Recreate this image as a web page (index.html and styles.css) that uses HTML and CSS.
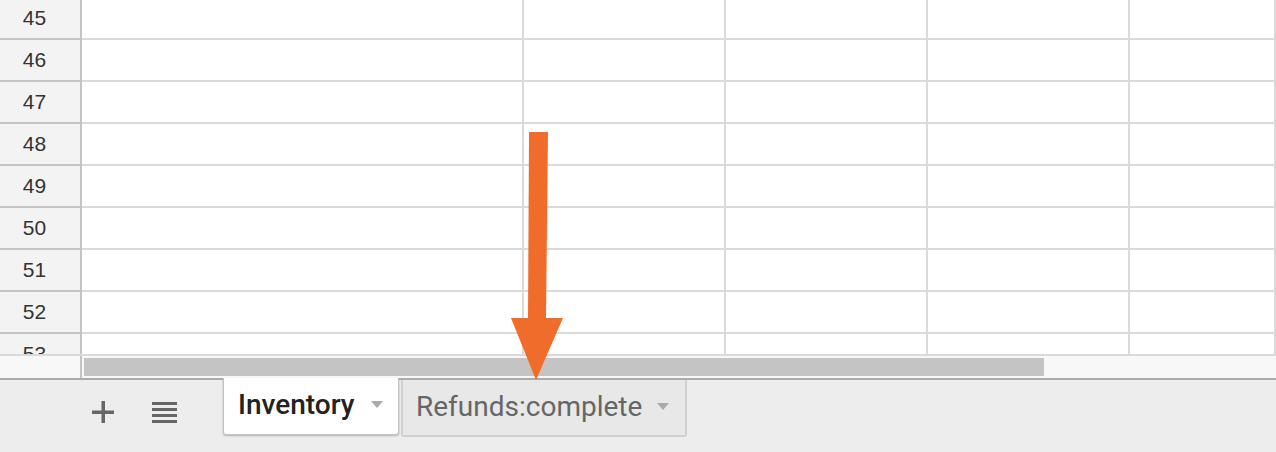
FILE: index.html
```html
<!DOCTYPE html>
<html>
<head>
<meta charset="utf-8">
<link rel="stylesheet" href="styles.css">
</head>
<body>
<div class="app">
  <div class="grid">
    <div class="rows">
      <div class="row"><div class="rh">45</div><div class="c ca"></div><div class="c cb"></div><div class="c cb"></div><div class="c cb"></div><div class="c ce"></div></div>
      <div class="row"><div class="rh">46</div><div class="c ca"></div><div class="c cb"></div><div class="c cb"></div><div class="c cb"></div><div class="c ce"></div></div>
      <div class="row"><div class="rh">47</div><div class="c ca"></div><div class="c cb"></div><div class="c cb"></div><div class="c cb"></div><div class="c ce"></div></div>
      <div class="row"><div class="rh">48</div><div class="c ca"></div><div class="c cb"></div><div class="c cb"></div><div class="c cb"></div><div class="c ce"></div></div>
      <div class="row"><div class="rh">49</div><div class="c ca"></div><div class="c cb"></div><div class="c cb"></div><div class="c cb"></div><div class="c ce"></div></div>
      <div class="row"><div class="rh">50</div><div class="c ca"></div><div class="c cb"></div><div class="c cb"></div><div class="c cb"></div><div class="c ce"></div></div>
      <div class="row"><div class="rh">51</div><div class="c ca"></div><div class="c cb"></div><div class="c cb"></div><div class="c cb"></div><div class="c ce"></div></div>
      <div class="row"><div class="rh">52</div><div class="c ca"></div><div class="c cb"></div><div class="c cb"></div><div class="c cb"></div><div class="c ce"></div></div>
      <div class="row"><div class="rh">53</div><div class="c ca"></div><div class="c cb"></div><div class="c cb"></div><div class="c cb"></div><div class="c ce"></div></div>
    </div>
  </div>
  <div class="hscroll">
    <div class="corner"></div>
    <div class="track"><div class="thumb"></div></div>
  </div>
  <div class="tabbar">
    <div class="btn add">
      <svg width="22" height="22" viewBox="0 0 22 22"><rect x="9.5" y="0" width="3.5" height="22" fill="#666"/><rect x="0" y="9.5" width="22" height="3.5" fill="#666"/></svg>
    </div>
    <div class="btn list">
      <svg width="25" height="23" viewBox="0 0 25 23"><rect x="0" y="1" width="25" height="3" fill="#666"/><rect x="0" y="7" width="25" height="3" fill="#666"/><rect x="0" y="13" width="25" height="3" fill="#666"/><rect x="0" y="19" width="25" height="3" fill="#666"/></svg>
    </div>
    <div class="tab active"><span class="label">Inventory</span><span class="caret"></span></div>
    <div class="tab inactive"><span class="label">Refunds:complete</span><span class="caret"></span></div>
  </div>
  <svg class="arrow" width="1276" height="452" viewBox="0 0 1276 452">
    <polygon points="529,132 548,132 546,319 528,319" fill="#f06c2b"/>
    <polygon points="511,318 563,318 536,380" fill="#f06c2b"/>
  </svg>
</div>
</body>
</html>
```
FILE: styles.css
```css
html, body {
  margin: 0;
  padding: 0;
  background: #ffffff;
  overflow: hidden;
}

.app {
  position: relative;
  width: 1276px;
  height: 452px;
  overflow: hidden;
}

.grid {
  height: 354px;
  overflow: hidden;
}

.rows {
  margin-top: -2px;
}

.row {
  display: flex;
  height: 42px;
}

.rh {
  box-sizing: border-box;
  width: 82px;
  height: 42px;
  flex: none;
  background: #f3f3f3;
  border-right: 2px solid #c4c4c4;
  border-bottom: 2px solid #c4c4c4;
  padding-right: 11px;
  text-align: center;
  font-family: "Liberation Sans", Arial, sans-serif;
  font-size: 21px;
  line-height: 40px;
  color: #333333;
}

.c {
  box-sizing: border-box;
  height: 42px;
  flex: none;
  border-right: 2px solid #dadada;
  border-bottom: 2px solid #dadada;
}

.ca { width: 442px; }
.cb { width: 202px; }
.ce { flex: 1; }

.hscroll {
  box-sizing: border-box;
  display: flex;
  height: 24px;
  border-top: 2px solid #dadada;
  background: #f8f8f8;
}

.corner {
  box-sizing: border-box;
  width: 82px;
  flex: none;
  border-right: 2px solid #c4c4c4;
}

.track {
  flex: 1;
  padding: 2px 0 0 2px;
}

.thumb {
  width: 960px;
  height: 18px;
  background: #c4c4c4;
}

.tabbar {
  box-sizing: border-box;
  display: flex;
  align-items: flex-start;
  height: 74px;
  border-top: 2px solid #ababab;
  background: #ededed;
}

.btn {
  flex: none;
  display: flex;
  margin-top: 21px;
}

.btn svg { display: block; }

.add { margin-left: 92px; }
.list { margin-left: 38px; }

.tab {
  box-sizing: border-box;
  flex: none;
  display: flex;
  align-items: center;
  justify-content: space-between;
  height: 57px;
  padding: 0 15px 3px 14px;
  font-family: Roboto, "Noto Sans", sans-serif;
  font-size: 28px;
  border-radius: 0 0 3px 3px;
}

.active {
  width: 176px;
  margin-left: 46px;
  margin-top: -2px;
  background: #ffffff;
  color: #222222;
  font-weight: 500;
  border: 1px solid #c2c2c2;
  border-top: none;
  box-shadow: 0 1px 2px rgba(0, 0, 0, 0.25);
  position: relative;
}

.inactive {
  width: 286px;
  margin-left: 2px;
  background: #e8e8e8;
  color: #666666;
  font-weight: 400;
  border: 2px solid #d0d0d0;
  border-top: none;
  padding-right: 16px;
  padding-left: 13px;
}

.caret {
  width: 0;
  height: 0;
  border-left: 6.5px solid transparent;
  border-right: 6.5px solid transparent;
  border-top: 7px solid #aaaaaa;
}

.arrow {
  position: absolute;
  left: 0;
  top: 0;
  pointer-events: none;
}
```
